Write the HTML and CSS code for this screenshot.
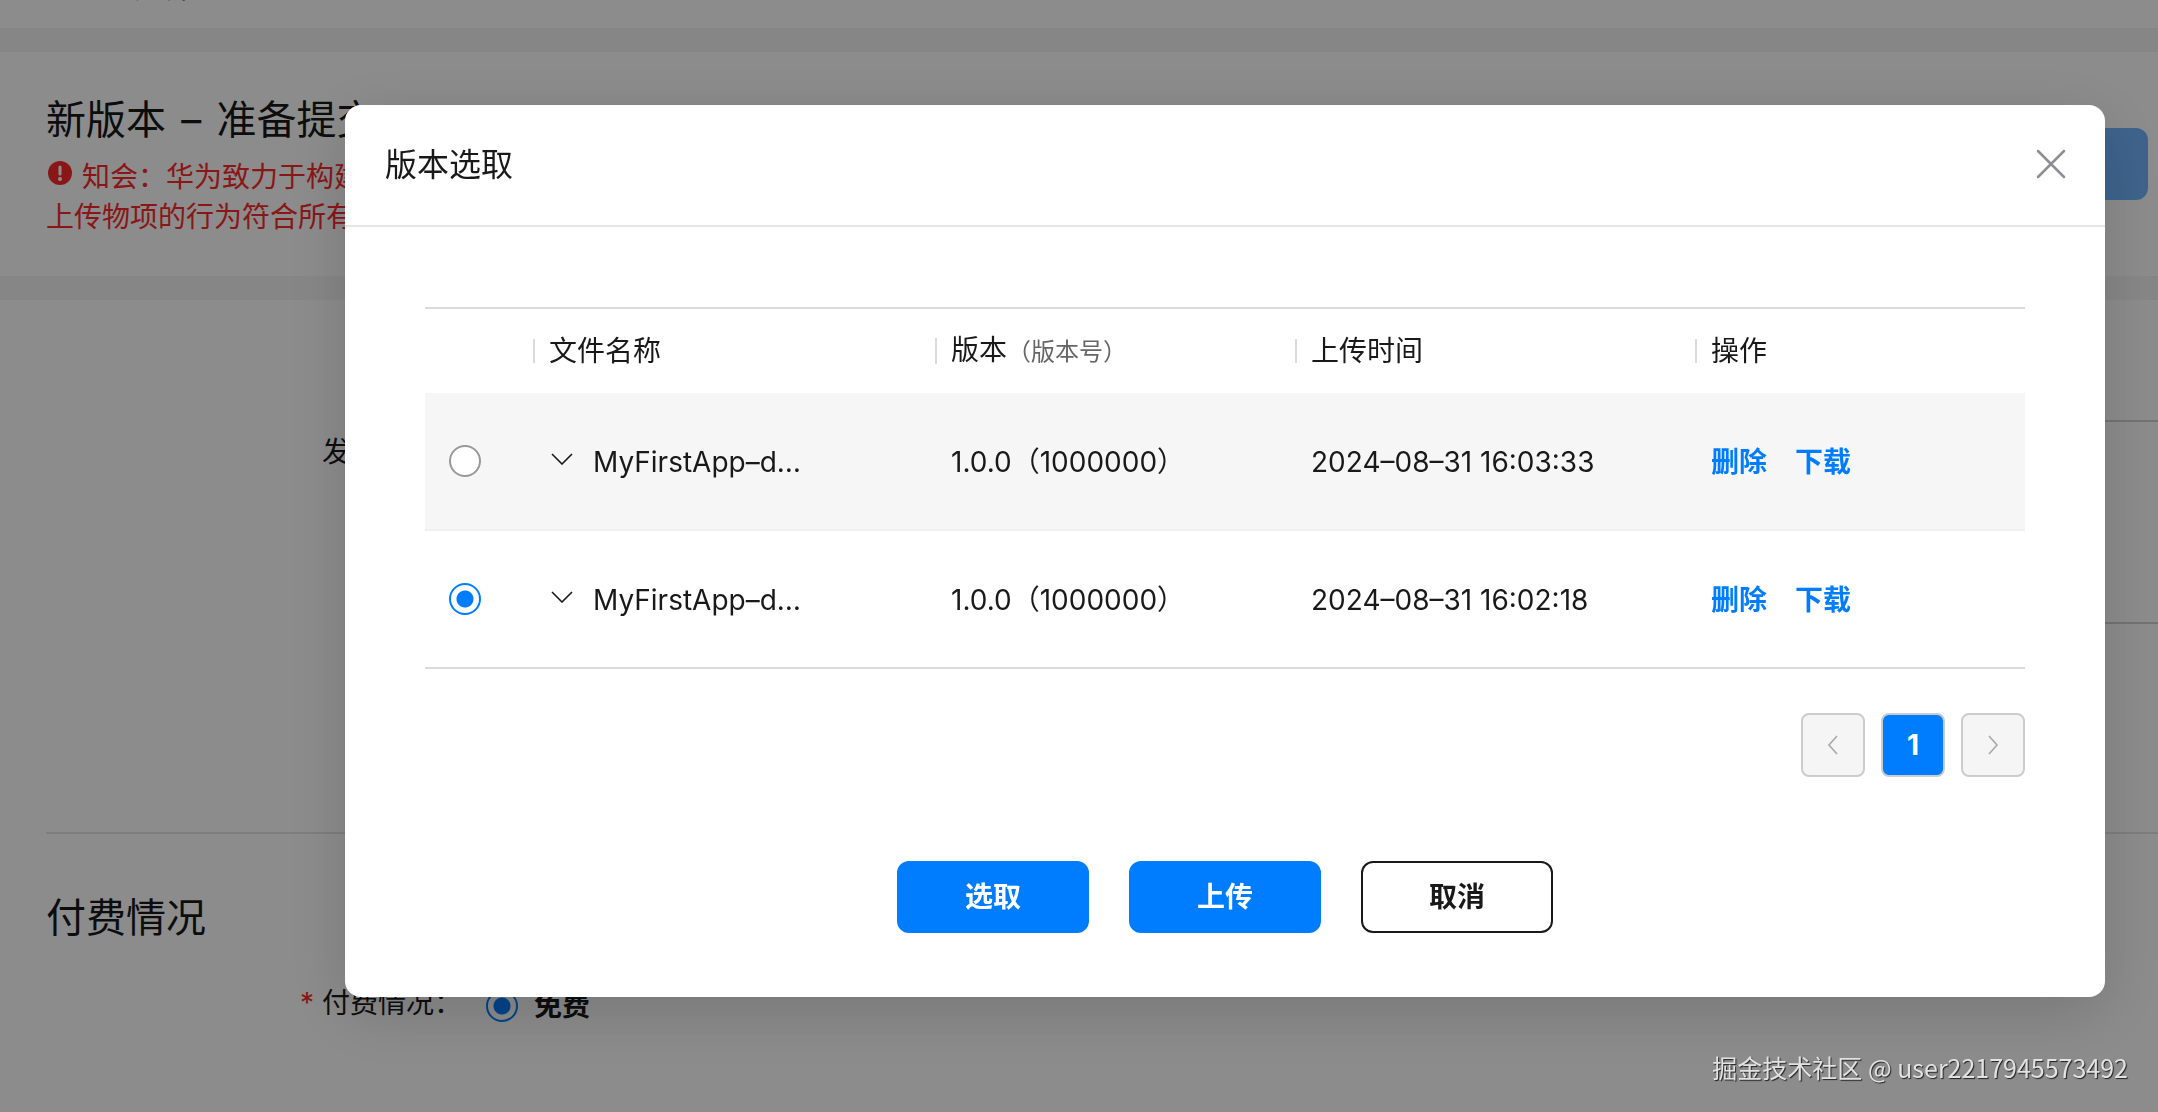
FILE: index.html
```html
<!DOCTYPE html>
<html lang="zh-CN">
<head>
<meta charset="utf-8">
<title>版本选取</title>
<meta name="viewport" content="width=device-width, initial-scale=1">
<link rel="stylesheet" href="styles.css">
</head>
<body>
<main class="page">
  <section class="panel panel-nav"><span>分析</span></section>
  <section class="panel panel-head">
    <div class="head-text">
      <h1 class="section-title">新版本 <span class="dash">–</span> 准备提交</h1>
      <p class="notice">
        <svg class="notice-icon" viewBox="0 0 26 26" aria-hidden="true"><circle cx="14" cy="13" r="12" fill="#fa2a2d"/><path d="M14 7v7" stroke="#fff" stroke-width="3" stroke-linecap="round"/><circle cx="14" cy="19" r="2" fill="#fff"/></svg>
        知会：华为致力于构建<br>上传物项的行为符合所有
      </p>
    </div>
    <button class="submit" type="button" aria-label="提交" disabled></button>
  </section>
  <section class="panel panel-form">
    <div class="release">
      <label class="field-label" for="release">发</label>
      <textarea class="release-box" id="release"></textarea>
    </div>
    <div class="payment">
      <h2 class="section-title">付费情况</h2>
      <div class="payment-row">
        <span class="field-label"><span class="required">*</span> 付费情况：</span>
        <label class="choice"><input class="radio" type="radio" name="pay" checked><span>免费</span></label>
      </div>
    </div>
  </section>
</main>

<div class="overlay">
  <div class="dialog" role="dialog" aria-modal="true" aria-labelledby="dialog-title">
    <header class="dialog-header">
      <h2 class="dialog-title" id="dialog-title">版本选取</h2>
      <button class="close" type="button" aria-label="关闭">
        <svg viewBox="0 0 32 32" aria-hidden="true"><path d="M3 2l26 26M29 2L3 28" fill="none" stroke="#8d8d92" stroke-width="2.5" stroke-linecap="round"/></svg>
      </button>
    </header>
    <div class="dialog-body">
      <table class="versions">
        <colgroup><col class="col-pick"><col class="col-name"><col class="col-version"><col class="col-time"><col></colgroup>
        <thead>
          <tr>
            <th></th>
            <th><span class="th-text">文件名称</span></th>
            <th><span class="th-text">版本<small>（版本号）</small></span></th>
            <th><span class="th-text">上传时间</span></th>
            <th><span class="th-text">操作</span></th>
          </tr>
        </thead>
        <tbody>
          <tr class="shaded">
            <td><input class="radio" type="radio" name="version" aria-label="选择 16:03:33 版本"></td>
            <td><div class="file"><button class="expand" type="button" aria-label="展开"><svg viewBox="0 0 22 12" aria-hidden="true"><path d="M1 1l10 10L21 1" fill="none" stroke="#191919" stroke-width="1.6"/></svg></button><span>MyFirstApp–d…</span></div></td>
            <td>1.0.0（1000000）</td>
            <td>2024–08–31 16:03:33</td>
            <td><div class="actions"><a href="#">删除</a><a href="#">下载</a></div></td>
          </tr>
          <tr>
            <td><input class="radio" type="radio" name="version" aria-label="选择 16:02:18 版本" checked></td>
            <td><div class="file"><button class="expand" type="button" aria-label="展开"><svg viewBox="0 0 22 12" aria-hidden="true"><path d="M1 1l10 10L21 1" fill="none" stroke="#191919" stroke-width="1.6"/></svg></button><span>MyFirstApp–d…</span></div></td>
            <td>1.0.0（1000000）</td>
            <td>2024–08–31 16:02:18</td>
            <td><div class="actions"><a href="#">删除</a><a href="#">下载</a></div></td>
          </tr>
        </tbody>
      </table>
      <nav class="pager" aria-label="分页">
        <button class="page-btn" type="button" aria-label="上一页"><svg viewBox="0 0 12 20" aria-hidden="true"><path d="M10 1L2 10l8 9" fill="none" stroke="#a8a8a8" stroke-width="1.6"/></svg></button>
        <button class="page-btn current" type="button" aria-current="page">1</button>
        <button class="page-btn" type="button" aria-label="下一页"><svg viewBox="0 0 12 20" aria-hidden="true"><path d="M2 1l8 9-8 9" fill="none" stroke="#a8a8a8" stroke-width="1.6"/></svg></button>
      </nav>
    </div>
    <footer class="dialog-footer">
      <button class="btn btn-primary" type="button">选取</button>
      <button class="btn btn-primary" type="button">上传</button>
      <button class="btn" type="button">取消</button>
    </footer>
  </div>
</div>
<div class="watermark">掘金技术社区 @ user2217945573492</div>
</body>
</html>
```

FILE: styles.css
```css
* {
  box-sizing: border-box;
}

body {
  margin: 0;
  min-height: 100vh;
  overflow: hidden;
  background: #f5f5f5;
  color: #191919;
  font: 28px/40px Inter, "Noto Sans CJK SC", sans-serif;
}

h1, h2, p {
  margin: 0;
  font-weight: 400;
}

button {
  padding: 0;
  border: 0;
  background: none;
  color: inherit;
  font: inherit;
}

svg {
  display: block;
}

/* page behind the dialog */
.page {
  display: flex;
  flex-direction: column;
  gap: 24px;
  min-height: 100vh;
}

.panel {
  background: #fff;
}

.panel-nav {
  display: flex;
  align-items: flex-end;
  height: 28px;
  padding: 0 134px 20px;
}

.panel-head {
  display: flex;
  justify-content: space-between;
  align-items: flex-start;
  height: 224px;
  padding: 40px 10px 0 46px;
}

.section-title {
  font-size: 40px;
  line-height: 56px;
}

.dash {
  padding: 0 4px;
}

.notice {
  padding-top: 9px;
  color: #fa2a2d;
}

.notice-icon {
  display: inline-block;
  width: 26px;
  height: 26px;
  margin-right: 2px;
  vertical-align: 1px;
}

.submit {
  width: 192px;
  height: 72px;
  margin-top: 36px;
  border-radius: 12px;
  background: #73b5ff;
}

.panel-form {
  flex: 1;
  padding-left: 46px;
}

.release {
  display: flex;
  height: 534px;
  padding: 120px 0 0 276px;
  border-bottom: 2px solid #e5e5e5;
}

.release .field-label {
  padding-top: 12px;
}

.release-box {
  flex: 1;
  height: 204px;
  margin-left: 40px;
  border: solid #d1d1d1;
  border-width: 2px 0;
  resize: none;
}

.payment {
  padding-top: 56px;
}

.payment-row {
  display: flex;
  gap: 24px;
  padding: 37px 0 0 254px;
}

.required {
  color: #fa2a2d;
}

.choice {
  display: flex;
  align-items: center;
  gap: 16px;
  padding-top: 3px;
  font-weight: 700;
}

.radio {
  display: block;
  flex: none;
  width: 32px;
  height: 32px;
  margin: 0;
  appearance: none;
  border: 2px solid #999;
  border-radius: 50%;
  background: #fff;
}

.radio:checked {
  border-color: #007dff;
  background: radial-gradient(circle, #007dff 8px, #fff 9px);
}

/* dialog */
.overlay {
  position: fixed;
  inset: 0;
  padding: 105px 53px 0 345px;
  background: rgba(0, 0, 0, 0.45);
}

.dialog {
  border-radius: 16px;
  background: #fff;
  box-shadow: 0 16px 64px rgba(0, 0, 0, 0.16);
}

.dialog-header {
  display: flex;
  justify-content: space-between;
  align-items: center;
  height: 122px;
  padding: 0 38px 0 40px;
  border-bottom: 2px solid #e5e5e5;
}

.dialog-title {
  font-size: 32px;
}

.close svg {
  width: 32px;
  height: 32px;
}

.dialog-body {
  padding: 80px 80px 0;
}

.versions {
  width: 100%;
  table-layout: fixed;
  border-collapse: separate;
  border-spacing: 0;
  border-top: 2px solid #dbdbdb;
  text-align: left;
}

.col-pick {
  width: 108px;
}

.col-name {
  width: 402px;
}

.col-version {
  width: 360px;
}

.col-time {
  width: 400px;
}

.versions th {
  height: 84px;
  padding: 0;
  font-weight: 400;
}

.th-text {
  display: block;
  padding-left: 14px;
  border-left: 2px solid #dbdbdb;
  line-height: 24px;
}

.versions small {
  color: #666;
  font-size: 24px;
}

.versions td {
  height: 138px;
  padding: 1px 0 0 16px;
  border-bottom: 2px solid #f0f0f0;
  white-space: nowrap;
}

.versions td:first-child {
  padding: 0 0 0 24px;
}

.versions tr:last-child td {
  border-color: #dbdbdb;
}

.shaded td {
  background: #f6f6f6;
}

.file {
  display: flex;
  align-items: center;
  gap: 20px;
}

.expand {
  padding: 0 0 6px 2px;
}

.expand svg {
  width: 22px;
  height: 12px;
}

.actions {
  display: flex;
  gap: 28px;
}

.actions a {
  color: #007dff;
  font-weight: 700;
  text-decoration: none;
}

.pager {
  display: flex;
  justify-content: flex-end;
  gap: 16px;
  padding-top: 44px;
}

.page-btn {
  display: flex;
  align-items: center;
  justify-content: center;
  width: 64px;
  height: 64px;
  border: 2px solid #ccc;
  border-radius: 8px;
  background: #f5f5f5;
}

.page-btn svg {
  width: 12px;
  height: 20px;
}

.page-btn.current {
  background: #007dff;
  color: #fff;
  font-weight: 700;
}

.dialog-footer {
  display: flex;
  justify-content: center;
  gap: 40px;
  padding: 84px 0 64px;
}

.btn {
  width: 192px;
  height: 72px;
  border: 2px solid #191919;
  border-radius: 12px;
  background: #fff;
  font-weight: 700;
}

.btn-primary {
  border-color: #007dff;
  background: #007dff;
  color: #fff;
}

.watermark {
  position: fixed;
  right: 30px;
  bottom: 27px;
  color: #e2e2e2;
  font: 25px/36px "Noto Sans CJK SC", sans-serif;
  text-shadow: 1px 1px 1px #222;
}
```
